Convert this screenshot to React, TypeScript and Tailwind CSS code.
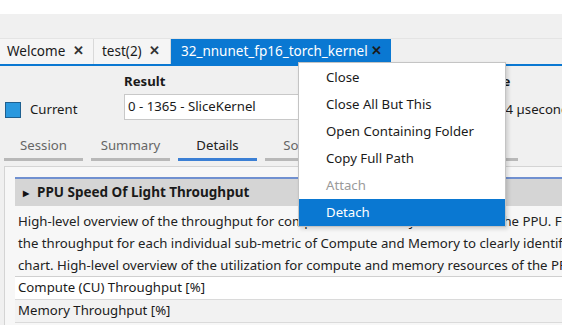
import React from 'react';

const menuItems = [
  { label: 'Close' },
  { label: 'Close All But This' },
  { label: 'Open Containing Folder' },
  { label: 'Copy Full Path' },
  { label: 'Attach', disabled: true },
  { label: 'Detach', active: true },
];

const subTabs = ['Session', 'Summary', 'Details', 'Source', 'Comments', 'Raw'];

export default function App() {
  return (
    <div
      className="relative w-[562px] h-[325px] overflow-hidden bg-[#f0f0f0] text-[13.2px] text-[#1a1a1a]"
      style={{ fontFamily: '"Noto Sans", "Open Sans", sans-serif' }}
    >
      {/* window top */}
      <div className="h-[14px] bg-white" />
      <div className="h-[24px] bg-[#f0f0f0]" />

      {/* document tabs */}
      <div className="flex h-[26px] border-t border-[#e4e4e4] text-[13.5px]">
        <div className="flex items-center justify-between w-[94px] pl-[7px] pr-[9px] border-r border-[#d9d9d9] bg-[#f5f5f5] whitespace-nowrap">
          <span>Welcome</span>
          <span className="text-[12.5px] font-bold text-[#333]">✕</span>
        </div>
        <div className="flex items-center justify-between w-[77px] pl-[8px] pr-[10px] border-r border-[#d9d9d9] bg-[#f5f5f5] whitespace-nowrap">
          <span>test(2)</span>
          <span className="text-[12.5px] font-bold text-[#333]">✕</span>
        </div>
        <div className="flex items-center justify-between w-[220px] pl-[10px] pr-[9px] bg-[#0a78d2] text-white whitespace-nowrap">
          <span>32_nnunet_fp16_torch_kernel</span>
          <span className="text-[12.5px] font-bold text-[#1a1a1a]">✕</span>
        </div>
      </div>
      <div className="h-[2px] bg-[#0a78d2]" />

      {/* result row */}
      <div className="relative h-[68px]">
        <div className="absolute left-[124px] top-[6px] font-bold">Result</div>
        <div className="absolute left-[5px] top-[34px] flex items-center gap-[9px]">
          <div className="w-[16px] h-[16px] bg-[#2a98de] border border-[#1e5f8f]" />
          <span>Current</span>
        </div>
        <div className="absolute left-[124px] top-[28px] w-[360px] h-[26px] bg-white border border-[#c8c8c8] pl-[3px] flex items-center">
          0 - 1365 - SliceKernel
        </div>
        <div className="absolute left-[478px] top-[6px] font-bold">Time</div>
        <div className="absolute left-[487px] top-[34px] whitespace-nowrap">1.54 µseconds</div>
      </div>

      {/* sub tabs */}
      <div className="flex gap-[8px] pl-[4px] h-[27px]">
        {subTabs.map((t) => (
          <div
            key={t}
            className={`w-[79px] shrink-0 flex items-start justify-center pt-[2px] border-b-[3px] ${
              t === 'Details' ? 'border-[#3b7fd4] text-[#222]' : 'border-[#b8b8b8] text-[#666]'
            }`}
          >
            {t}
          </div>
        ))}
      </div>

      {/* details panel */}
      <div className="ml-[4px] mt-[5px] border-l border-t border-[#d4d4d4] bg-[#f7f7f7] pl-[10px] pt-[10px] h-[200px]">
        <div className="h-[29px] border-t-2 border-[#7090d0] bg-[#d5d5d5] flex items-center pl-[8px] gap-[8px] font-bold whitespace-nowrap text-[13.5px]">
          <span className="text-[8px] text-[#111]">▶</span>
          <span>PPU Speed Of Light Throughput</span>
        </div>
        <div className="pl-[3px] pt-[4px] leading-[22px] whitespace-nowrap overflow-hidden text-[#222]">
          <div>High-level overview of the throughput for compute and memory resources of the PPU. For each unit,</div>
          <div>the throughput for each individual sub-metric of Compute and Memory to clearly identify the highest</div>
          <div>chart. High-level overview of the utilization for compute and memory resources of the PPU presented</div>
        </div>
        <div className="border-t border-[#d0d0d0]">
          <div className="h-[23px] bg-white border-b border-[#dadada] pl-[3px] flex items-center">Compute (CU) Throughput [%]</div>
          <div className="h-[23px] bg-[#f2f2f2] border-b border-[#dadada] pl-[3px] flex items-center">Memory Throughput [%]</div>
        </div>
      </div>

      {/* context menu */}
      <div className="absolute left-[298px] top-[62px] w-[208px] bg-white border border-[#c4c4c4] shadow-[2px_2px_4px_rgba(0,0,0,0.15)] pt-[1px]">
        {menuItems.map((m) => (
          <div
            key={m.label}
            className={`h-[27px] flex items-center pl-[27px] whitespace-nowrap ${
              m.active ? 'bg-[#0a78d2] text-white' : m.disabled ? 'text-[#9a9a9a]' : 'text-[#1a1a1a]'
            }`}
          >
            {m.label}
          </div>
        ))}
      </div>
    </div>
  );
}
